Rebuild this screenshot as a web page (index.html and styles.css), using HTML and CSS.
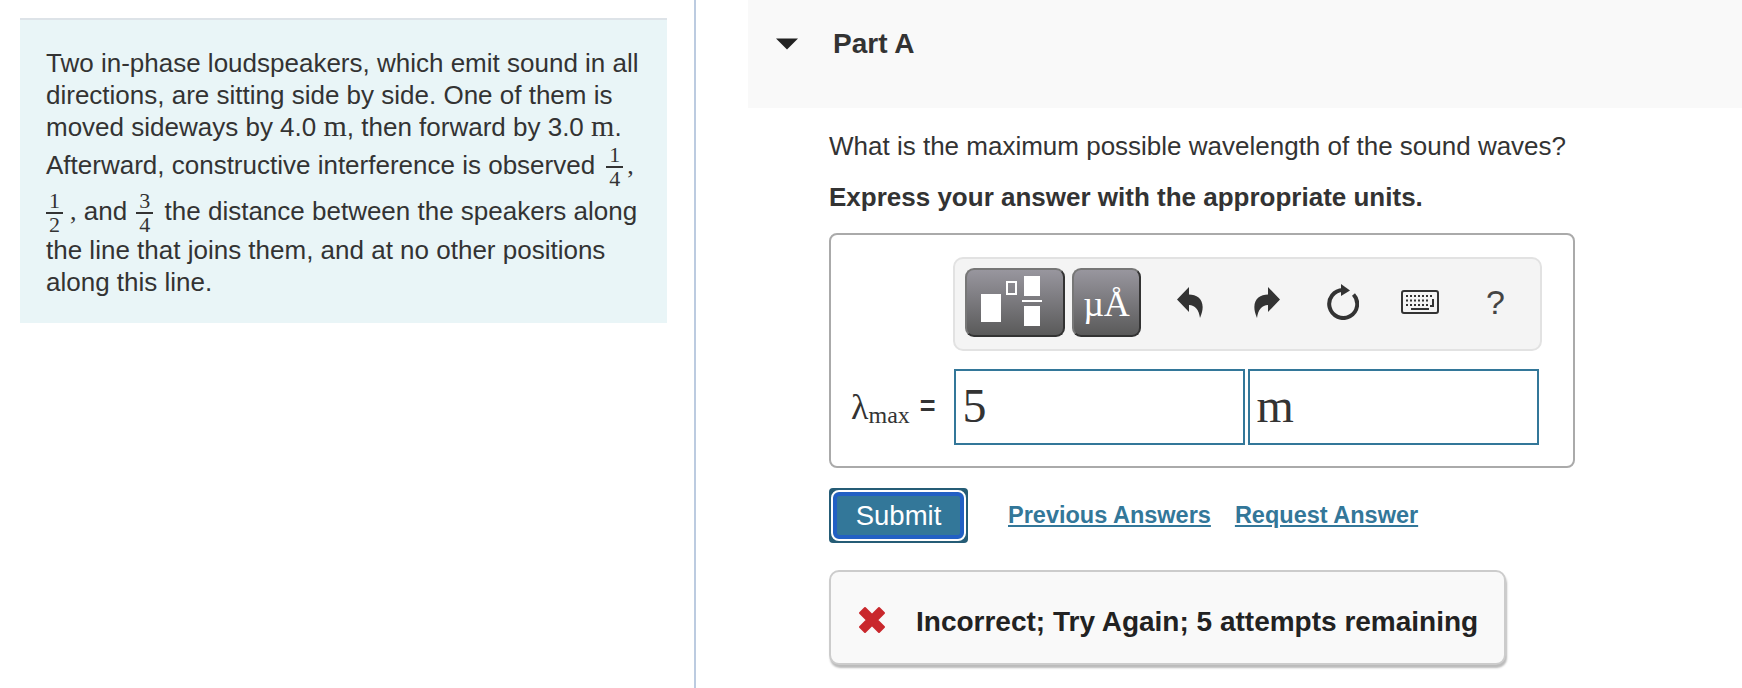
FILE: index.html
```html
<!DOCTYPE html>
<html lang="en">
<head>
    <meta charset="UTF-8">
    <title>Part A</title>
    <link rel="stylesheet" href="styles.css">
</head>
<body>
    <div class="page">
        <div class="left">
            <div class="intro">
                <p>Two in-phase loudspeakers, which emit sound in all<br>
                directions, are sitting side by side. One of them is<br>
                moved sideways by 4.0 <span class="unit">m</span>, then forward by 3.0 <span class="unit">m</span>.<br>
                <span class="line-frac">Afterward, constructive interference is observed <span class="frac"><span class="num">1</span><span class="den">4</span></span><span class="comma">,</span></span><br>
                <span class="line-frac last"><span class="frac first"><span class="num">1</span><span class="den">2</span></span><span class="comma">,</span> and <span class="frac mid"><span class="num">3</span><span class="den">4</span></span> the distance between the speakers along</span><br>
                the line that joins them, and at no other positions<br>
                along this line.</p>
            </div>
        </div>
        <div class="right">
            <div class="part-head">
                <svg class="caret" width="22" height="12" viewBox="0 0 22 12"><path d="M0 0.5H22L11 11.5Z" fill="#222"/></svg>
                <span class="part-title">Part A</span>
            </div>
            <div class="part-body">
                <p class="question">What is the maximum possible wavelength of the sound waves?</p>
                <p class="express">Express your answer with the appropriate units.</p>
                <div class="answer-box">
                    <div class="toolbar">
                        <div class="tool-btn btn-templates">
                            <svg width="96" height="65" viewBox="0 0 96 65">
                                <rect x="14" y="24" width="20" height="28" fill="#fff"/>
                                <rect x="40" y="12" width="9" height="12" fill="none" stroke="#fff" stroke-width="2"/>
                                <rect x="57" y="6" width="16" height="20" fill="#fff"/>
                                <rect x="55" y="30" width="20" height="2" fill="#fff"/>
                                <rect x="57" y="36" width="16" height="20" fill="#fff"/>
                            </svg>
                        </div>
                        <div class="tool-btn btn-units"><span class="mu">µÅ</span></div>
                        <svg class="ic-undo" width="27" height="31" viewBox="0 0 27 31"><path d="M0 12.500L12 0V7.500C22 7.500 30 15 23 31C22 23 18 18 12 18V25Z" fill="#333"/></svg>
                        <svg class="ic-redo" width="27" height="31" viewBox="0 0 27 31"><path d="M27 12.500L15 0V7.500C5 7.500 -3 15 4 31C5 23 9 18 15 18V25Z" fill="#333"/></svg>
                        <svg class="ic-reset" width="32" height="36" viewBox="0 0 32 36"><path d="M16 6A14 14 0 1 0 26.500 10.500" fill="none" stroke="#333" stroke-width="4"/><path d="M14 0L23 6.500L14 12Z" fill="#333"/></svg>
                        <svg class="ic-keys" width="38" height="24" viewBox="0 0 38 24">
                            <rect x="1" y="1" width="36" height="22" rx="2" fill="none" stroke="#333" stroke-width="2"/>
                            <path d="M5 6h28M5 10.500h23M5 15h23" stroke="#333" stroke-width="2" stroke-dasharray="2 2" fill="none"/>
                            <path d="M10 19h18" stroke="#333" stroke-width="2" fill="none"/>
                            <path d="M32 9v7h-3" stroke="#333" stroke-width="2" fill="none"/>
                        </svg>
                        <span class="help">?</span>
                    </div>
                    <div class="answer-row">
                        <span class="var"><i>λ</i><sub>max</sub></span>
                        <span class="eq">=</span>
                        <div class="input">5</div>
                        <div class="input">m</div>
                    </div>
                </div>
                <div class="actions">
                    <div class="submit-wrap"><button class="submit">Submit</button></div>
                    <a class="link first-link" href="#">Previous Answers</a>
                    <a class="link" href="#">Request Answer</a>
                </div>
                <div class="feedback">
                    <svg width="28" height="28" viewBox="0 0 28 28"><path d="M2 7L7 2L14 9L21 2L26 7L19 14L26 21L21 26L14 19L7 26L2 21L9 14Z" fill="#c9282d" stroke="#c9282d" stroke-width="2" stroke-linejoin="round"/></svg>
                    <span class="feedback-text">Incorrect; Try Again; 5 attempts remaining</span>
                </div>
            </div>
        </div>
    </div>
</body>
</html>
```

FILE: styles.css
```css
body{
    margin: 0;
    background-color: #fff;
    color: #333;
    font-family: "Liberation Sans", Arial, sans-serif;
    font-size: 26px;
}
.page{
    display: flex;
    height: 688px;
    overflow: hidden;
}
.left{
    width: 696px;
    flex: none;
    padding: 18px 27px 0 20px;
    box-sizing: border-box;
    border-right: 2px solid #bccbe0;
}
.intro{
    background-color: #e9f5f7;
    border-top: 2px solid #dde3e8;
    padding: 27px 0 0 26px;
    height: 305px;
    box-sizing: border-box;
}
.intro p{
    margin: 0;
    line-height: 32px;
}
.unit{
    font-family: "Liberation Serif", serif;
    font-size: 30px;
    line-height: 0;
}
.comma{
    font-family: "Liberation Serif", serif;
}
.frac{
    display: inline-flex;
    flex-direction: column;
    vertical-align: middle;
    font-family: "Liberation Serif", serif;
    font-size: 22px;
    line-height: 22px;
    text-align: center;
    margin: 0 4px 0 4px;
}
.frac.first{
    margin: 0 7px 0 0;
}
.frac.mid{
    margin: 0 4px 0 2px;
}
.num{
    border-bottom: 2px solid #333;
    padding: 0 3px;
}
.line-frac{
    display: inline-block;
    line-height: 42px;
    margin-top: 1px;
}
.line-frac.last{
    margin-top: 0;
    margin-bottom: -2px;
}
.right{
    flex: 1;
    padding-left: 52px;
}
.part-head{
    height: 108px;
    background-color: #f9f9f9;
    display: flex;
    align-items: flex-start;
    padding: 27px 0 0 28px;
    box-sizing: border-box;
}
.caret{
    margin: 11px 35px 0 0;
}
.part-title{
    font-weight: bold;
    font-size: 28px;
    line-height: 34px;
}
.part-body{
    padding-left: 81px;
}
.question{
    margin: 22px 0 0;
    line-height: 32px;
}
.express{
    margin: 19px 0 0;
    font-weight: bold;
    line-height: 32px;
}
.answer-box{
    width: 746px;
    height: 235px;
    margin-top: 20px;
    box-sizing: border-box;
    border: 2px solid #aaa;
    border-radius: 8px;
    padding: 22px 30px 0 122px;
}
.toolbar{
    width: 589px;
    height: 94px;
    box-sizing: border-box;
    background-color: #f4f4f4;
    border: 2px solid #e2e2e2;
    border-radius: 10px;
    display: flex;
    align-items: center;
    padding: 0 0 4px 10px;
}
.tool-btn{
    height: 69px;
    box-sizing: border-box;
    border-radius: 9px;
    border: 2px solid #333;
    border-top-color: #777;
    border-left-color: #777;
    background: linear-gradient(#98969e, #5a5a5a);
    display: flex;
    align-items: center;
    justify-content: center;
    overflow: hidden;
}
.btn-templates{
    width: 100px;
}
.btn-units{
    width: 69px;
    margin-left: 7px;
}
.mu{
    font-family: "Liberation Serif", serif;
    font-size: 36px;
    color: #fff;
    position: relative;
    top: 2px;
}
.ic-undo{
    margin-left: 36px;
}
.ic-redo{
    margin-left: 49px;
}
.ic-reset{
    margin-left: 47px;
}
.ic-keys{
    margin-left: 42px;
}
.help{
    margin-left: 47px;
    font-size: 34px;
    color: #444;
}
.answer-row{
    display: flex;
    align-items: center;
    margin-top: 18px;
    height: 75px;
    margin-left: -102px;
}
.var{
    font-family: "Liberation Serif", serif;
    font-size: 36px;
    line-height: 1;
}
.var i{
    font-style: normal;
}
.var sub{
    font-size: 24px;
    vertical-align: -4px;
    line-height: 0;
}
.eq{
    font-size: 27px;
    font-weight: bold;
    margin: 0 18px 0 10px;
}
.input{
    width: 291px;
    height: 76px;
    box-sizing: border-box;
    border: 2px solid #337799;
    margin-right: 3px;
    flex: none;
    font-family: "Liberation Serif", serif;
    font-size: 48px;
    line-height: 70px;
    padding-left: 7px;
}
.actions{
    display: flex;
    align-items: center;
    margin-top: 20px;
}
.submit-wrap{
    width: 139px;
    height: 55px;
    box-sizing: border-box;
    padding: 2px;
    background-color: #255c76;
    border-radius: 4px;
}
.submit{
    display: block;
    width: 100%;
    height: 100%;
    box-sizing: border-box;
    background-color: #337799;
    border: 2px solid #fff;
    border-radius: 8px;
    box-shadow: inset 0 0 0 4px #2260c4;
    color: #fff;
    font-family: "Liberation Sans", Arial, sans-serif;
    font-size: 27.500px;
    padding: 0;
}
.link{
    color: #337799;
    font-weight: bold;
    font-size: 23.500px;
    text-decoration: underline;
}
.first-link{
    margin: 0 24px 0 40px;
}
.feedback{
    margin-top: 27px;
    width: 677px;
    height: 95px;
    box-sizing: border-box;
    background-color: #f9f9f9;
    border: 2px solid #ccc;
    border-radius: 10px;
    box-shadow: 1px 3px 2px #bbb;
    display: flex;
    align-items: center;
    padding: 4px 0 0 27px;
    gap: 30px;
    font-weight: bold;
    font-size: 28px;
    color: #222;
}
.feedback-text{
    margin-top: 4px;
}
```
